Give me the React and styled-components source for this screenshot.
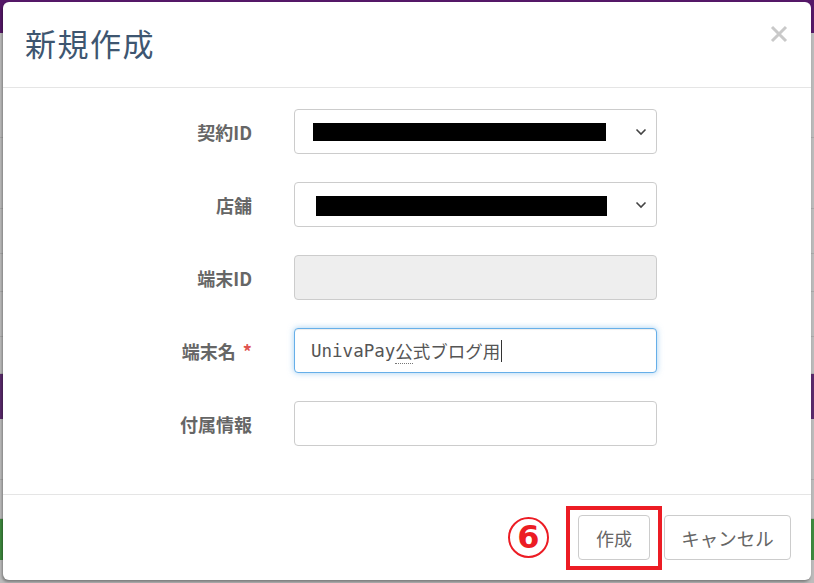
import React from 'react'
import styled, { createGlobalStyle } from 'styled-components'

const Global = createGlobalStyle`
  html, body { margin: 0; padding: 0; }
  body {
    width: 814px;
    height: 583px;
    overflow: hidden;
    background: #b9b9b9;
    font-family: "Noto Sans CJK JP", "Noto Sans", sans-serif;
  }
`

const Page = styled.div`
  position: relative;
  width: 814px;
  height: 583px;
  display: flex;
  flex-direction: column;
`

const TopBar = styled.div`
  height: 33px;
  background: #551868;
  flex-shrink: 0;
`

const Strip = styled.div`
  height: ${p => p.h}px;
  background: ${p => p.bg || '#bcbcbc'};
  border-bottom: 1px solid ${p => p.line || '#a9a9a9'};
  flex-shrink: 0;
`

const Modal = styled.div`
  position: absolute;
  left: 3px;
  top: 2px;
  width: 808px;
  height: 578px;
  background: #fff;
  border-radius: 6px;
  box-shadow: -1px 2px 3px rgba(0,0,0,0.35);
  display: flex;
  flex-direction: column;
`

const Header = styled.div`
  height: 86px;
  border-bottom: 1px solid #e5e5e5;
  display: flex;
  align-items: center;
  justify-content: space-between;
  padding: 0 23px 0 22px;
  box-sizing: border-box;
`

const Title = styled.h1`
  margin: 0;
  font-size: 31px;
  font-weight: 400;
  color: #3e5670;
  letter-spacing: 1.5px;
  position: relative;
  top: -2px;
`

const Close = styled.button`
  border: none;
  background: none;
  padding: 0;
  align-self: flex-start;
  margin-top: 23px;
  width: 18px;
  height: 18px;
  cursor: pointer;
`

const Body = styled.div`
  flex: 1;
  padding-top: 21px;
`

const Form = styled.div`
  display: grid;
  grid-template-columns: 249px 363px;
  column-gap: 42px;
  row-gap: 28px;
`

const Label = styled.label`
  text-align: right;
  align-self: center;
  font-size: 18px;
  font-weight: 700;
  color: #666;
  white-space: nowrap;
`

const Req = styled.span`
  color: #e0534f;
  margin-left: 7px;
`

const Field = styled.div`
  height: 45px;
  box-sizing: border-box;
  border: 1px solid ${p => (p.focus ? '#66afe9' : '#ccc')};
  border-radius: 4px;
  background: ${p => (p.disabled ? '#eee' : '#fff')};
  box-shadow: ${p => (p.focus ? 'inset 0 1px 1px rgba(0,0,0,.075), 0 0 6px rgba(102,175,233,.6)' : 'none')};
  display: flex;
  align-items: center;
  padding: 0 9px 0 ${p => p.pl || 16}px;
  font-family: "DejaVu Sans Mono", "Noto Sans CJK JP", monospace;
  font-size: 17.5px;
  color: #555;
`

const Redact = styled.div`
  width: ${p => p.w}px;
  height: ${p => p.h}px;
  background: #000;
  margin-top: ${p => p.mt || 0}px;
`

const Chevron = styled.svg`
  margin-left: auto;
`

const Ime = styled.span`
  border-bottom: 1px dotted #777;
`

const Caret = styled.span`
  display: inline-block;
  width: 1px;
  height: 22px;
  background: #333;
  margin-left: 1px;
`

const Footer = styled.div`
  height: 86px;
  border-top: 1px solid #e5e5e5;
  display: flex;
  align-items: flex-start;
  justify-content: flex-end;
  gap: 14px;
  padding: 20px 20px 0 0;
  box-sizing: border-box;
`

const Button = styled.button`
  position: relative;
  height: 45px;
  width: ${p => p.w}px;
  padding: 0;
  border: 1px solid #ccc;
  border-radius: 4px;
  background: #fff;
  color: #666;
  font-family: "Noto Sans CJK JP", sans-serif;
  font-size: ${p => p.fs || 18}px;
  cursor: pointer;
`

const Highlight = styled.span`
  position: absolute;
  left: -13px;
  top: -10px;
  width: 96px;
  height: 64px;
  box-sizing: border-box;
  border: 4px solid #ec1c24;
  pointer-events: none;
`

const Step = styled.span`
  position: absolute;
  left: -71px;
  top: 1px;
  width: 41px;
  height: 41px;
  box-sizing: border-box;
  border: 2.5px solid #ec1c24;
  border-radius: 50%;
  color: #ec1c24;
  font-family: "DejaVu Sans", "Liberation Sans", sans-serif;
  font-weight: 700;
  font-size: 32px;
  line-height: 36px;
  text-align: center;
`

const Down = () => (
  <Chevron width="12" height="8" viewBox="0 0 12 8">
    <polyline points="1.5,1.5 6,6 10.5,1.5" fill="none" stroke="#444" strokeWidth="1.6" />
  </Chevron>
)

export default function App() {
  return (
    <>
      <Global />
      <Page>
        <TopBar />
        <Strip h={104} />
        <Strip h={70} />
        <Strip h={44} />
        <Strip h={37} />
        <Strip h={44} />
        <Strip h={36} />
        <Strip h={44} bg="#5a2a6c" line="#5a2a6c" />
        <Strip h={60} />
        <Strip h={38} />
        <Strip h={40} bg="#3f8a3f" line="#3f8a3f" />
        <Strip h={40} line="transparent" />
        <Modal>
          <Header>
            <Title>新規作成</Title>
            <Close aria-label="close">
              <svg width="18" height="18" viewBox="0 0 18 18">
                <path d="M2 2 L16 16 M16 2 L2 16" stroke="#c9c9c9" strokeWidth="3" />
              </svg>
            </Close>
          </Header>
          <Body>
            <Form>
              <Label>契約ID</Label>
              <Field pl={18}>
                <Redact w={293} h={18} />
                <Down />
              </Field>
              <Label>店舗</Label>
              <Field pl={21}>
                <Redact w={291} h={20} mt={2} />
                <Down />
              </Field>
              <Label>端末ID</Label>
              <Field disabled />
              <Label>
                端末名<Req>*</Req>
              </Label>
              <Field focus>
                UnivaPay<Ime>公</Ime>式ブログ用<Caret />
              </Field>
              <Label>付属情報</Label>
              <Field />
            </Form>
          </Body>
          <Footer>
            <Button w={72}>
              <Step>6</Step>
              作成
              <Highlight />
            </Button>
            <Button w={127} fs={18.5}>キャンセル</Button>
          </Footer>
        </Modal>
      </Page>
    </>
  )
}
